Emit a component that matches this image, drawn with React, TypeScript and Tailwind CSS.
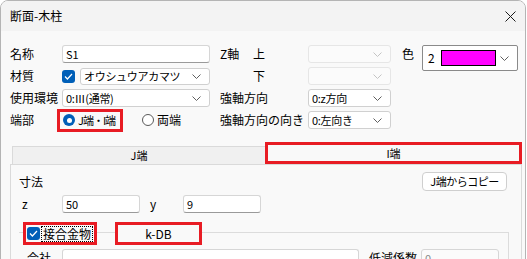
import { Fragment } from 'react';

const font = { fontFamily: '"Noto Sans CJK JP", "Noto Sans", sans-serif' };

function Chevron({ light }: { light?: boolean }) {
  return (
    <svg width="9" height="5" viewBox="0 0 9 5" className="shrink-0">
      <path d="M0.5 0.5 L4.5 4.5 L8.5 0.5" fill="none" stroke={light ? '#c4c4c4' : '#5f5f5f'} strokeWidth="1" />
    </svg>
  );
}

function Combo({ value, className, disabled }: { value?: string; className: string; disabled?: boolean }) {
  return (
    <div
      className={
        'flex items-center justify-between pl-[3px] pr-[8px] rounded-[3px] border ' +
        (disabled ? 'border-[#e6e6e6] bg-[#fbfbfb]' : 'border-[#d0d0d0] bg-white') +
        ' ' +
        className
      }
    >
      <span className="text-[11px] leading-none tracking-[-0.3px] text-black whitespace-nowrap">{value}</span>
      <Chevron light={disabled} />
    </div>
  );
}

function TextBox({ value, className, disabled }: { value: string; className: string; disabled?: boolean }) {
  return (
    <div
      className={
        'flex items-center pl-[3px] rounded-[3px] border border-[#d6d6d6] ' +
        (disabled ? 'bg-[#fbfbfb] text-[#8a8a8a]' : 'bg-white border-b-[#9a9a9a] text-black') +
        ' ' +
        className
      }
    >
      <span className="text-[11px] leading-none">{value}</span>
    </div>
  );
}

function Check() {
  return (
    <div className="w-[13px] h-[13px] rounded-[3px] bg-[#005fb8] flex items-center justify-center shrink-0">
      <svg width="9" height="7" viewBox="0 0 9 7">
        <path d="M1 3.5 L3.4 6 L8 1" fill="none" stroke="white" strokeWidth="1.2" />
      </svg>
    </div>
  );
}

const red = 'border-[3px] border-[#e81c24]';

export default function App() {
  const rowsB = [
    { a: 'Z軸', b: '上', v: '', dis: true },
    { a: '', b: '下', v: '', dis: true },
    { a: '強軸方向', b: '', v: '0:z方向', dis: false },
    { a: '強軸方向の向き', b: '', v: '0:左向き', dis: false },
  ];

  return (
    <div className="w-[527px] h-[259px] bg-white overflow-hidden" style={font}>
      <div className="w-[526px] h-[262px] rounded-t-[8px] border border-[#b4b4b4] bg-[#f9f9f9] overflow-hidden text-black">
        {/* title bar */}
        <div className="h-[30px] bg-[#f3f3f3] flex items-center justify-between pl-[9px] pr-[9px]">
          <span className="text-[12px] leading-none">断面-木柱</span>
          <svg width="11" height="11" viewBox="0 0 11 11">
            <path d="M0.5 0.5 L10.5 10.5 M10.5 0.5 L0.5 10.5" stroke="#1a1a1a" strokeWidth="1" />
          </svg>
        </div>

        <div className="pl-[9px] pt-[12px]">
          {/* upper form */}
          <div className="flex">
            <div className="w-[200px] flex flex-col">
              <div className="h-[22px] flex items-center">
                <span className="w-[52px] text-[12px] leading-none">名称</span>
                <TextBox value="S1" className="w-[148px] h-[18px]" />
              </div>
              <div className="h-[22px] flex items-center">
                <span className="w-[52px] text-[12px] leading-none">材質</span>
                <Check />
                <Combo value="オウシュウアカマツ" className="ml-[5px] w-[130px] h-[17px]" />
              </div>
              <div className="h-[22px] flex items-center">
                <span className="w-[52px] text-[12px] leading-none">使用環境</span>
                <Combo value="0:Ⅲ(通常)" className="w-[148px] h-[18px]" />
              </div>
              <div className="h-[22px] flex items-center">
                <span className="w-[47px] text-[12px] leading-none">端部</span>
                <div className={'w-[66px] h-[23px] flex items-center pl-[3px] ' + red}>
                  <div className="w-[12px] h-[12px] rounded-full bg-[#005fb8] flex items-center justify-center shrink-0">
                    <div className="w-[5px] h-[5px] rounded-full bg-white" />
                  </div>
                  <span className="ml-[3px] text-[11px] leading-none tracking-[-1px] whitespace-nowrap">J端・I端</span>
                </div>
                <div className="ml-[19px] w-[12px] h-[12px] rounded-full border border-[#5a5a5a] bg-white shrink-0" />
                <span className="ml-[3px] text-[12px] leading-none whitespace-nowrap">両端</span>
              </div>
            </div>

            <div className="ml-[10px] w-[171px] flex flex-col">
              {rowsB.map((r, i) => (
                <div key={i} className="h-[22px] flex items-center">
                  {r.b ? (
                    <Fragment>
                      <span className="w-[33px] text-[12px] leading-none">{r.a}</span>
                      <span className="w-[55px] text-[12px] leading-none">{r.b}</span>
                    </Fragment>
                  ) : (
                    <span className="w-[88px] text-[12px] leading-none whitespace-nowrap">{r.a}</span>
                  )}
                  <Combo value={r.v} disabled={r.dis} className="w-[83px] h-[18px]" />
                </div>
              ))}
            </div>

            <div className="ml-[11px] flex items-start">
              <span className="w-[20px] h-[22px] flex items-center text-[12px] leading-none">色</span>
              <div className="mt-[2px] w-[96px] h-[26px] rounded-[2px] border border-[#8a8a8a] bg-white flex items-center pl-[5px] pr-[8px]">
                <span className="text-[12px] leading-none w-[13px]">2</span>
                <div className="w-[55px] h-[16px] border border-black bg-[#ff00ff]" />
                <div className="flex-1" />
                <Chevron />
              </div>
            </div>
          </div>

          {/* tabs */}
          <div className="mt-[11px] ml-[2px] flex items-end h-[22px]">
            <div className="w-[253px] h-[18px] border-t border-l border-[#dadada] bg-[#f0f0f0] flex items-center justify-center text-[11px] leading-none">
              J端
            </div>
            <div className={'w-[257px] h-[22px] bg-[#f9f9f9] flex items-center justify-center text-[11px] leading-none ' + red}>
              I端
            </div>
          </div>

          {/* tab panel */}
          <div className="w-[512px] h-[120px] border border-[#dadada] bg-[#f9f9f9] pl-[8px]">
            <div className="mt-[7px] h-[19px] flex items-center justify-between pr-[14px]">
              <span className="text-[12px] leading-none">寸法</span>
              <div className="w-[85px] h-[19px] rounded-[4px] border border-[#cfcfcf] bg-white flex items-center justify-center text-[11px] tracking-[-0.5px] leading-none whitespace-nowrap">
                J端からコピー
              </div>
            </div>

            <div className="mt-[4px] h-[18px] flex items-center">
              <span className="w-[43px] pl-[3px] text-[12px] leading-none">z</span>
              <TextBox value="50" className="w-[78px] h-[18px]" />
              <span className="ml-[10px] w-[33px] text-[12px] leading-none">y</span>
              <TextBox value="9" className="w-[78px] h-[18px]" />
            </div>

            <div className="mt-[19px] w-[490px] h-[40px] border-t border-r border-[#dcdcdc]">
              <div className="-mt-[11px] flex items-center">
                <div className={'ml-[4px] w-[74px] h-[23px] flex items-center pl-[1px] bg-[#f9f9f9] ' + red}>
                  <Check />
                  <span className="ml-[1px] border border-dotted border-black text-[12px] leading-none px-[1px] py-[1px] whitespace-nowrap">
                    接合金物
                  </span>
                </div>
                <div className={'ml-[18px] w-[87px] h-[23px] flex items-center justify-center bg-[#f9f9f9] text-[12px] leading-none ' + red}>
                  k-DB
                </div>
              </div>
              <div className="mt-[4px] flex items-center">
                <span className="ml-[8px] w-[35px] text-[12px] leading-none">会社</span>
                <TextBox value="" className="w-[297px] h-[18px]" />
                <span className="ml-[10px] w-[52px] text-[12px] leading-none whitespace-nowrap">低減係数</span>
                <TextBox value="0" disabled className="w-[78px] h-[18px]" />
              </div>
            </div>
          </div>
        </div>
      </div>
    </div>
  );
}
